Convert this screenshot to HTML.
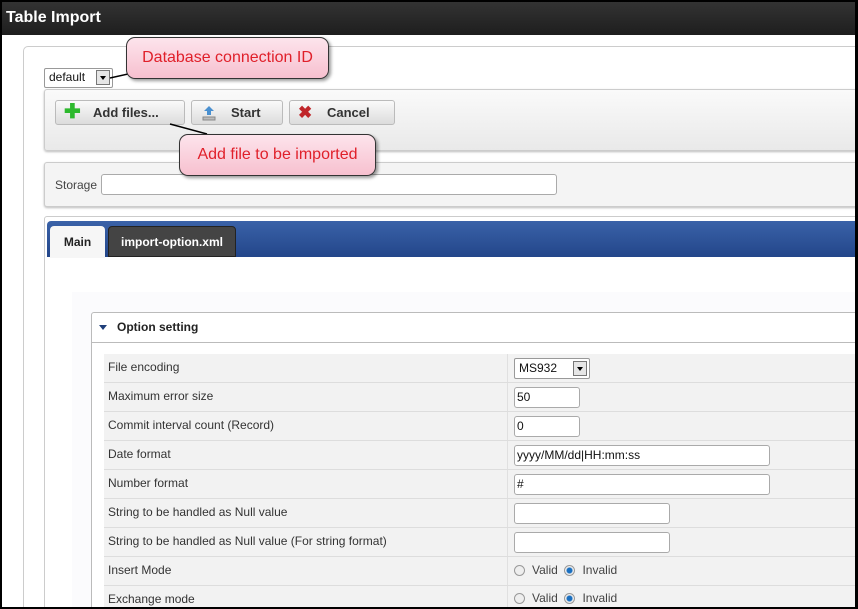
<!DOCTYPE html>
<html><head><style>
*{box-sizing:border-box;margin:0;padding:0}
html,body{width:858px;height:609px;overflow:hidden}
body{background:#000;font-family:"Liberation Sans",Arial,sans-serif;font-size:12px;color:#333;position:relative}
.win{position:absolute;left:2px;top:2px;width:853px;height:605px;background:#fff;overflow:hidden}
.title{position:absolute;left:0;top:0;width:100%;height:33px;background:linear-gradient(#333,#1e1e1e);color:#fff;font-weight:bold;font-size:16px;line-height:31px;padding-left:4px}
.abs{position:absolute}
.outer{left:21px;top:44px;width:850px;height:580px;border:1px solid #ccc;border-radius:5px}
.sel{border:1px solid #999;background:#fff;border-radius:2px;font-size:12px;line-height:17px;padding-left:4px;color:#111}
.sel .ar{position:absolute;right:2px;top:1px;width:14px;height:15px;border:1px solid #777;background:#e6e6e6}
.sel .ar:after{content:"";position:absolute;left:3px;top:5px;border:3px solid transparent;border-top:4px solid #000}
.tb{left:42px;top:87px;width:830px;height:62px;border:1px solid #ccc;background:linear-gradient(#fafafa,#e9e9e9);border-radius:3px;box-shadow:0 1px 2px #bbb}
.btn{top:98px;height:25px;border:1px solid #bbb;border-radius:3px;background:linear-gradient(#fafafa,#dcdcdc);font-size:13px;font-weight:bold;color:#333;line-height:23px}
.stor{left:42px;top:160px;width:830px;height:45px;border:1px solid #ccc;background:#f4f4f4;border-radius:3px;box-shadow:0 1px 2px #bbb}
.inp{border:1px solid #aaa;background:#fff;border-radius:3px;font-size:12px;line-height:18px;padding-left:2px;color:#111}
.call{background:linear-gradient(#fde4ec,#f7c0cf);border:1px solid #333;border-radius:9px;color:#e0202a;font-size:16px;text-align:center;box-shadow:2px 2px 3px rgba(0,0,0,.4)}
.row{left:102px;width:760px;height:29px;border-bottom:1px solid #ddd;background:#f2f2f2}
.row .l{position:absolute;left:4px;top:6px;font-size:12px;color:#333}
.row .v{position:absolute;left:403px;top:0;height:28px;border-left:1px solid #e0e0e0;width:350px}
.rad{display:inline-block;width:11px;height:11px;border-radius:50%;border:1px solid #999;background:#eee;vertical-align:-2px;margin-right:7px}
.rad.on{background:radial-gradient(#1a6fc0 2.5px,#eee 3.5px)}
</style></head><body>
<div class="win">
<div class="title">Table Import</div>
<div class="abs outer"></div>
<div class="abs sel" style="left:42px;top:66px;width:69px;height:20px">default<span class="ar"></span></div>
<div class="abs tb"></div>
<div class="abs btn" style="left:53px;width:130px;padding-left:37px"><span class="abs" style="left:8px;top:0;color:#2db92d;font-size:20px;line-height:22px">✚</span>Add files...</div>
<div class="abs btn" style="left:189px;width:92px;padding-left:39px"><svg class="abs" style="left:10px;top:4px" width="14" height="16"><path d="M7 1 L12 6 H9 V10 H5 V6 H2Z" fill="#4a90d0"/><rect x="1" y="12" width="12" height="3" fill="#bbb" stroke="#888"/></svg>Start</div>
<div class="abs btn" style="left:287px;width:106px;padding-left:37px"><span class="abs" style="left:8px;top:0;color:#c0262a;font-size:17px">✖</span>Cancel</div>
<div class="abs stor"></div>
<div class="abs" style="left:53px;top:176px;font-size:12px;color:#444">Storage</div>
<div class="abs inp" style="left:99px;top:172px;width:456px;height:21px"></div>
<div class="abs" style="left:42px;top:214px;width:830px;height:400px;border:1px solid #ccc;border-radius:3px"></div>
<div class="abs" style="left:45px;top:219px;width:830px;height:36px;background:linear-gradient(#3a62a8,#23468a);border-radius:4px 0 0 0"></div>
<div class="abs" style="left:48px;top:224px;width:55px;height:32px;background:#f6f6f6;border-radius:4px 4px 0 0;font-weight:bold;font-size:12px;color:#222;text-align:center;line-height:32px">Main</div>
<div class="abs" style="left:106px;top:224px;width:128px;height:31px;background:#444;border-radius:4px 4px 0 0;font-weight:bold;font-size:12px;color:#fff;text-align:center;line-height:31px;border:1px solid #222">import-option.xml</div>
<div class="abs" style="left:70px;top:290px;width:800px;height:320px;background:#fbfbfd"></div>
<div class="abs" style="left:89px;top:310px;width:780px;height:300px;border:1px solid #bbb;border-radius:3px;background:#fff"></div>
<div class="abs" style="left:89px;top:310px;width:780px;height:31px;border-bottom:1px solid #bbb;font-weight:bold;font-size:12px;color:#222;line-height:31px;padding-left:26px">Option setting<span class="abs" style="left:8px;top:13px;border:4px solid transparent;border-top:5px solid #1f3f7a;width:0;height:0"></span></div>
<div class="abs row" style="top:352px"><span class="l">File encoding</span><div class="v"><div class="abs sel" style="left:6px;top:4px;width:76px;height:21px;line-height:19px">MS932<span class="ar" style="top:2px"></span></div></div></div>
<div class="abs row" style="top:381px"><span class="l">Maximum error size</span><div class="v"><div class="abs inp" style="left:6px;top:4px;width:66px;height:21px">50</div></div></div>
<div class="abs row" style="top:410px"><span class="l">Commit interval count (Record)</span><div class="v"><div class="abs inp" style="left:6px;top:4px;width:66px;height:21px">0</div></div></div>
<div class="abs row" style="top:439px"><span class="l">Date format</span><div class="v"><div class="abs inp" style="left:6px;top:4px;width:256px;height:21px">yyyy/MM/dd|HH:mm:ss</div></div></div>
<div class="abs row" style="top:468px"><span class="l">Number format</span><div class="v"><div class="abs inp" style="left:6px;top:4px;width:256px;height:21px">#</div></div></div>
<div class="abs row" style="top:497px"><span class="l">String to be handled as Null value</span><div class="v"><div class="abs inp" style="left:6px;top:4px;width:156px;height:21px"></div></div></div>
<div class="abs row" style="top:526px"><span class="l">String to be handled as Null value (For string format)</span><div class="v"><div class="abs inp" style="left:6px;top:4px;width:156px;height:21px"></div></div></div>
<div class="abs row" style="top:555px"><span class="l">Insert Mode</span><div class="v"><span class="abs" style="left:6px;top:6px;color:#444;white-space:nowrap"><span class="rad"></span>Valid &nbsp;<span class="rad on"></span>Invalid</span></div></div>
<div class="abs row" style="top:584px"><span class="l">Exchange mode</span><div class="v"><span class="abs" style="left:6px;top:5px;color:#444;white-space:nowrap"><span class="rad"></span>Valid &nbsp;<span class="rad on"></span>Invalid</span></div></div>
<svg class="abs" style="left:0;top:0" width="853" height="200"><line x1="108" y1="76" x2="135" y2="70" stroke="#000" stroke-width="1.5"/><line x1="168" y1="122" x2="205" y2="132" stroke="#000" stroke-width="1.5"/></svg>
<div class="abs call" style="left:124px;top:35px;width:203px;height:42px;line-height:40px">Database connection ID</div>
<div class="abs call" style="left:177px;top:132px;width:197px;height:42px;line-height:40px">Add file to be imported</div>
</div>
</body></html>
